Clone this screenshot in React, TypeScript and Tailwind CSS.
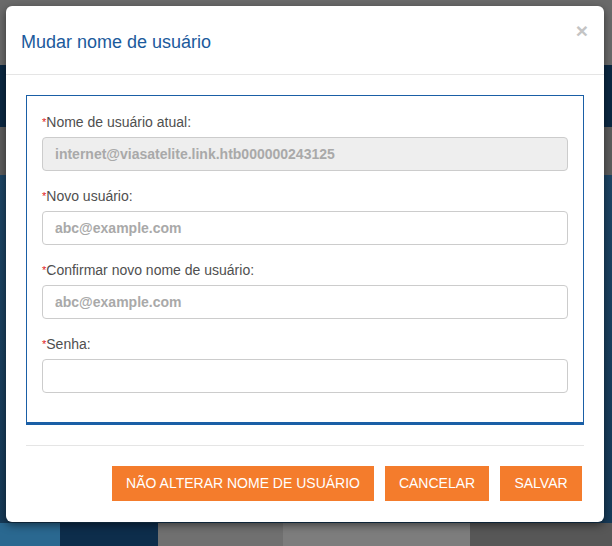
import React from "react";

const font = { fontFamily: '"Liberation Sans", Arial, Helvetica, sans-serif' };

function Field({ label, placeholder, value, disabled }: { label: string; placeholder?: string; value?: string; disabled?: boolean }) {
  return (
    <div className="flex flex-col">
      <label className="text-[14px] leading-[20px] text-[#4f4f4f] h-[20px]">
        <span className="text-[#e0161b] text-[11px] align-top">*</span>
        {label}
      </label>
      <input
        className={
          "mt-[5px] h-[34px] w-full rounded-[4px] border border-[#cccccc] px-[12px] text-[14px] font-bold outline-none placeholder:text-[#a9a9a9] " +
          (disabled ? "bg-[#eeeeee] text-[#a9a9a9]" : "bg-white text-[#555]")
        }
        style={font}
        placeholder={placeholder}
        defaultValue={value}
        disabled={disabled}
        readOnly={disabled}
      />
    </div>
  );
}

export default function App() {
  return (
    <div className="relative h-[546px] w-[612px] overflow-hidden bg-[#5e5e5e]" style={font}>
      {/* dimmed background page */}
      <div className="flex h-full flex-col">
        <div className="h-[65px] bg-[#6a6a6a]" />
        <div className="h-[62px] bg-[#0b2842]" />
        <div className="h-[48px] bg-[#5c5c5c]" />
        <div className="h-[348px] bg-gradient-to-b from-[#1d4565] to-[#163a58]" />
        <div className="flex h-[23px]">
          <div className="w-[60px] bg-[#2a6890]" />
          <div className="w-[98px] bg-[#0d2d4b]" />
          <div className="w-[125px] bg-[#707070]" />
          <div className="w-[187px] bg-[#7d7d7d]" />
          <div className="flex-1 bg-[#575757]" />
        </div>
      </div>

      {/* modal */}
      <div className="absolute left-[6px] top-[6px] w-[598px] rounded-[6px] bg-white shadow-[0_3px_9px_rgba(0,0,0,0.5)]">
        <div className="relative h-[69px] border-b border-[#e5e5e5] pl-[15px] pt-[24px]">
          <h4 className="text-[18px] leading-[24px] text-[#1b5a9c]">Mudar nome de usuário</h4>
          <span className="absolute right-[16px] top-[14px] text-[21px] font-bold leading-[21px] text-[#c4c4c4]">×</span>
        </div>
        <div className="px-[20px] pt-[20px]">
          <div className="flex flex-col gap-[15px] border border-b-[3px] border-[#1a5fa6] px-[15px] pb-[29px] pt-[16px]">
            <Field label="Nome de usuário atual:" value="internet@viasatelite.link.htb000000243125" disabled />
            <Field label="Novo usuário:" placeholder="abc@example.com" />
            <Field label="Confirmar novo nome de usuário:" placeholder="abc@example.com" />
            <Field label="Senha:" />
          </div>
          <div className="mt-[20px] flex justify-end gap-[11px] border-t border-[#e5e5e5] pb-[21px] pt-[20px] pr-[2px]">
            <button className="h-[35px] bg-[#f47c2c] px-[14px] text-[14px] text-white">NÃO ALTERAR NOME DE USUÁRIO</button>
            <button className="h-[35px] w-[104px] bg-[#f47c2c] text-[14px] text-white">CANCELAR</button>
            <button className="h-[35px] w-[82px] bg-[#f47c2c] text-[14px] text-white">SALVAR</button>
          </div>
        </div>
      </div>
    </div>
  );
}
